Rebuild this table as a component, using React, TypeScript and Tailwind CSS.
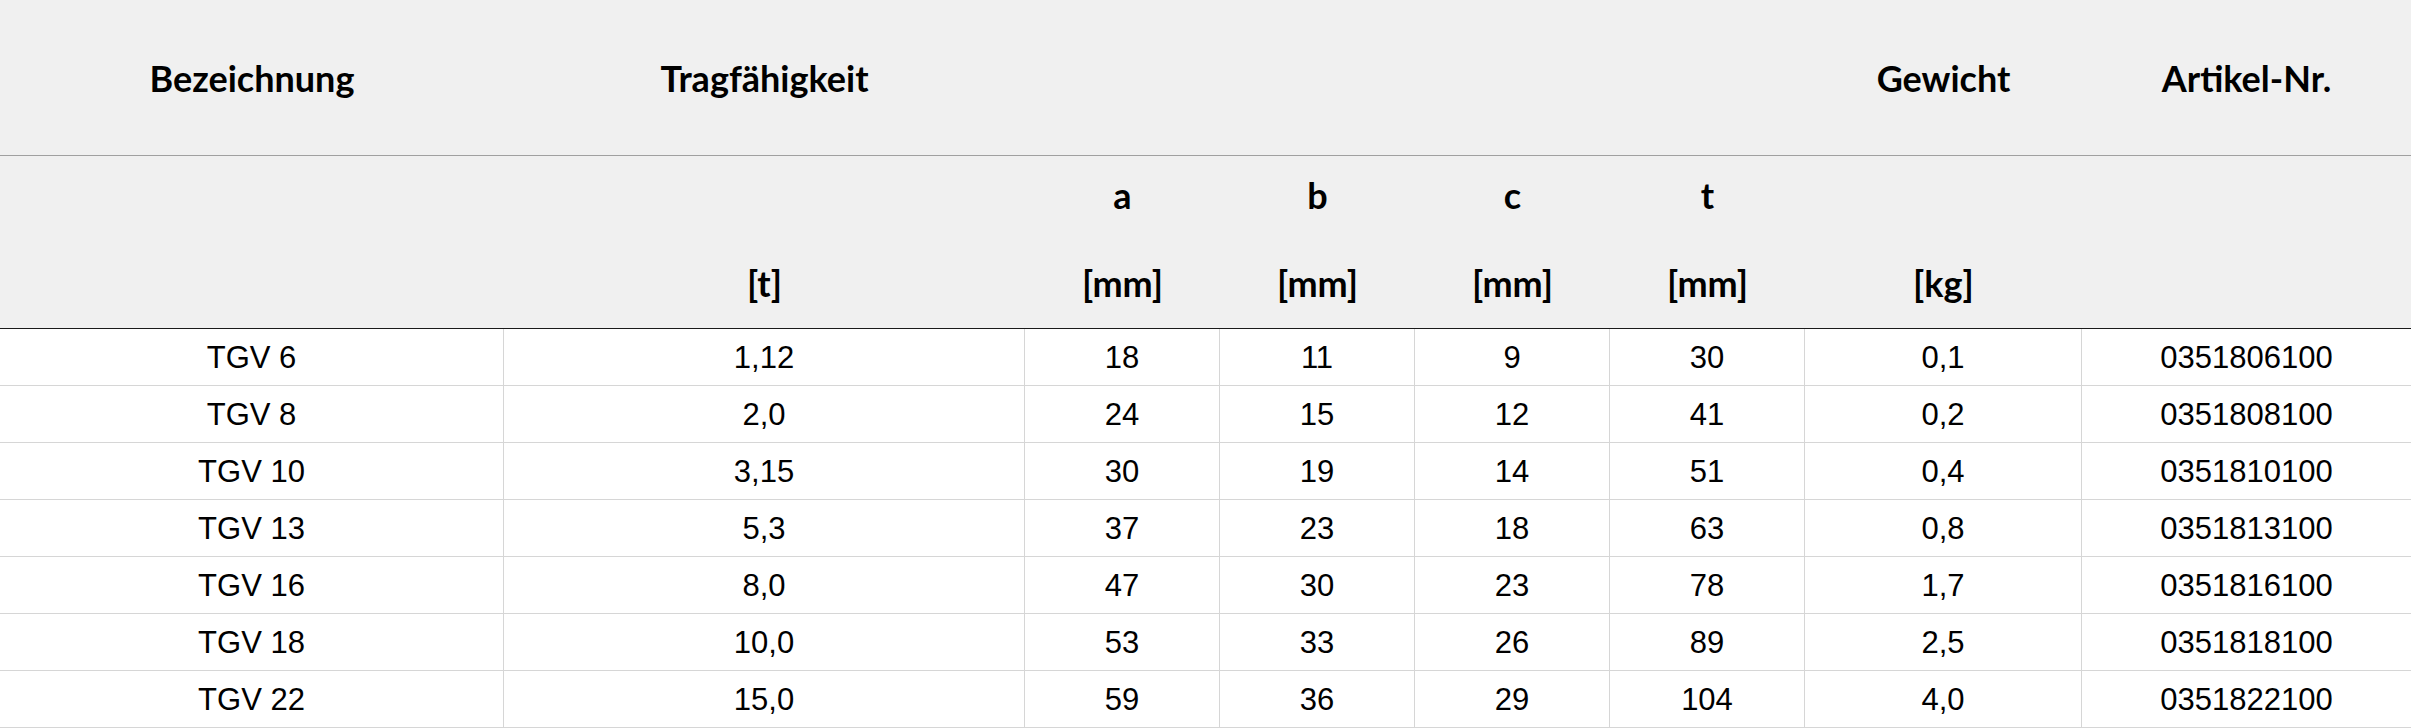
import React from "react";

const cols = "grid grid-cols-[504px_521px_195px_195px_195px_195px_277px_329px]";

const rows: string[][] = [
  ["TGV 6", "1,12", "18", "11", "9", "30", "0,1", "0351806100"],
  ["TGV 8", "2,0", "24", "15", "12", "41", "0,2", "0351808100"],
  ["TGV 10", "3,15", "30", "19", "14", "51", "0,4", "0351810100"],
  ["TGV 13", "5,3", "37", "23", "18", "63", "0,8", "0351813100"],
  ["TGV 16", "8,0", "47", "30", "23", "78", "1,7", "0351816100"],
  ["TGV 18", "10,0", "53", "33", "26", "89", "2,5", "0351818100"],
  ["TGV 22", "15,0", "59", "36", "29", "104", "4,0", "0351822100"],
];

const top = ["Bezeichnung", "Tragfähigkeit", "", "", "", "", "Gewicht", "Artikel-Nr."];
const sub: [string, string][] = [
  ["", ""],
  ["", "[t]"],
  ["a", "[mm]"],
  ["b", "[mm]"],
  ["c", "[mm]"],
  ["t", "[mm]"],
  ["", "[kg]"],
  ["", ""],
];

export default function App() {
  return (
    <div className="w-[2411px] h-[728px] overflow-hidden bg-white text-black">
      <div className="bg-[#f0f0f0] font-['Lato',sans-serif] font-bold text-[36px] leading-[44px]">
        <div className={`${cols} h-[156px] items-center border-b border-[#a0a0a0]`}>
          {top.map((t, i) => (
            <div key={i} className="text-center">
              {t}
            </div>
          ))}
        </div>
        <div className={`${cols} h-[173px] border-b border-[#1a1a1a]`}>
          {sub.map(([a, b], i) => (
            <div key={i} className="flex flex-col items-center pt-[17px]">
              <div className="h-[44px]">{a}</div>
              <div className="h-[44px] mt-[44px]">{b}</div>
            </div>
          ))}
        </div>
      </div>
      <div className="font-['Liberation_Sans',Arial,sans-serif] text-[31px]">
        {rows.map((r, ri) => (
          <div key={ri} className={`${cols} h-[57px] border-b border-[#d6d6d6]`}>
            {r.map((c, ci) => (
              <div
                key={ci}
                className={`flex items-center justify-center pt-[3px] ${ci < 7 ? "border-r border-[#d6d6d6]" : ""}`}
              >
                {c}
              </div>
            ))}
          </div>
        ))}
      </div>
    </div>
  );
}
